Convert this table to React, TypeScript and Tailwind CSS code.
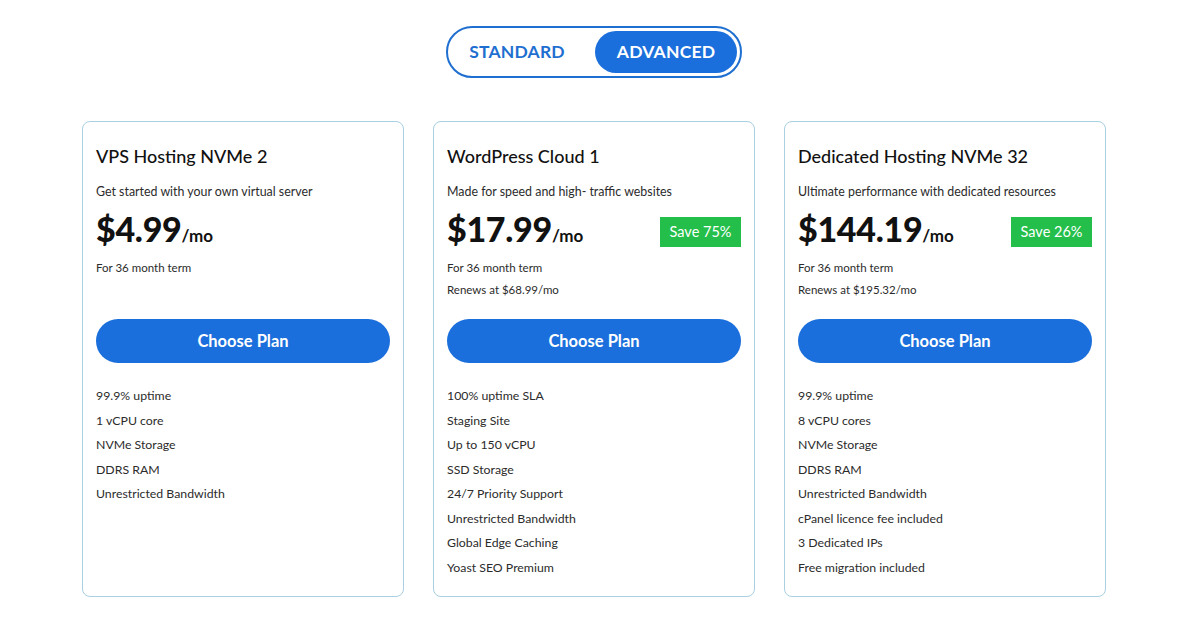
import React from "react"

type Plan = {
  name: string
  tagline: string
  price: string
  save?: string
  renews?: string
  features: string[]
}

const plans: Plan[] = [
  {
    name: "VPS Hosting NVMe 2",
    tagline: "Get started with your own virtual server",
    price: "$4.99",
    features: ["99.9% uptime", "1 vCPU core", "NVMe Storage", "DDRS RAM", "Unrestricted Bandwidth"],
  },
  {
    name: "WordPress Cloud 1",
    tagline: "Made for speed and high- traffic websites",
    price: "$17.99",
    save: "Save 75%",
    renews: "Renews at $68.99/mo",
    features: [
      "100% uptime SLA",
      "Staging Site",
      "Up to 150 vCPU",
      "SSD Storage",
      "24/7 Priority Support",
      "Unrestricted Bandwidth",
      "Global Edge Caching",
      "Yoast SEO Premium",
    ],
  },
  {
    name: "Dedicated Hosting NVMe 32",
    tagline: "Ultimate performance with dedicated resources",
    price: "$144.19",
    save: "Save 26%",
    renews: "Renews at $195.32/mo",
    features: [
      "99.9% uptime",
      "8 vCPU cores",
      "NVMe Storage",
      "DDRS RAM",
      "Unrestricted Bandwidth",
      "cPanel licence fee included",
      "3 Dedicated IPs",
      "Free migration included",
    ],
  },
]

function PlanCard({ plan }: { plan: Plan }) {
  return (
    <div className="border border-[#a8d0e2] rounded-lg px-[13px] pt-[23px] pb-[16px] bg-white">
      <h3 className="text-[18px] leading-[22px] font-medium text-[#111]">{plan.name}</h3>
      <p className="mt-[17px] text-[12.4px] leading-[16px] text-[#2b2b2b]">{plan.tagline}</p>

      <div className="mt-[12px] flex items-center justify-between h-[36px]">
        <div className="flex items-baseline text-[#111]">
          <span className="text-[34px] leading-[36px] font-black tracking-[-0.3px]">{plan.price}</span>
          <span className="text-[17px] font-bold">/mo</span>
        </div>
        {plan.save && (
          <span className="mt-[4px] bg-[#24bf4b] text-white text-[14.5px] h-[30px] w-[81px] flex items-center justify-center">
            {plan.save}
          </span>
        )}
      </div>

      <div className="mt-[12px] h-[59px] text-[11.5px] text-[#2b2b2b]">
        <p className="leading-[16px]">For 36 month term</p>
        {plan.renews && <p className="mt-[6px] leading-[16px]">{plan.renews}</p>}
      </div>

      <button className="w-full h-[44px] rounded-full bg-[#1a6fdc] text-white text-[16.5px] font-bold">
        Choose Plan
      </button>

      <ul className="mt-[21px] text-[12.3px] leading-[24.5px] text-[#2b2b2b]">
        {plan.features.map((f) => (
          <li key={f}>{f}</li>
        ))}
      </ul>
    </div>
  )
}

export default function App() {
  return (
    <div
      className="min-h-screen bg-white pt-[26px] pr-[12px]"
      style={{ fontFamily: "Lato, 'Liberation Sans', sans-serif" }}
    >
      <div className="flex justify-center">
        <div className="flex items-center h-[52px] w-[296px] rounded-full border-2 border-[#1f6fd0] p-[3px]">
          <button className="flex-1 h-full pr-[12px] text-[#1f6fd0] text-[17.5px] font-bold tracking-[0.2px]">
            STANDARD
          </button>
          <button className="w-[142px] h-[42px] rounded-full bg-[#1a6fdc] text-white text-[17.5px] font-bold tracking-[0.2px]">
            ADVANCED
          </button>
        </div>
      </div>

      <div className="mt-[43px] mx-auto w-[1024px] grid grid-cols-3 gap-[29px]">
        {plans.map((p) => (
          <PlanCard key={p.name} plan={p} />
        ))}
      </div>
    </div>
  )
}
